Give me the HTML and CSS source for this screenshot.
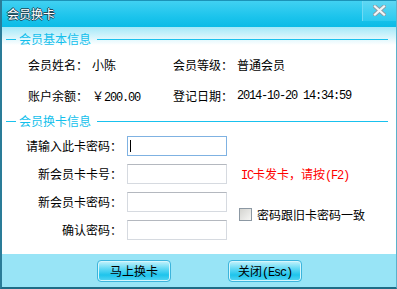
FILE: index.html
```html
<!DOCTYPE html>
<html lang="zh-CN">
<head>
    <meta charset="UTF-8">
    <title>会员换卡</title>
    <link rel="stylesheet" href="styles.css">
</head>
<body>
    <div class="window">
        <div class="titlebar">
            <span class="title">会员换卡</span>
            <div class="close">
                <svg width="13" height="11" viewBox="0 0 13 11">
                    <path d="M2 1.5 L11 9.5 M11 1.5 L2 9.5" stroke="#8a9ea8" stroke-width="4" stroke-linecap="square"/>
                    <path d="M2 1.5 L11 9.5 M11 1.5 L2 9.5" stroke="#f2f5f6" stroke-width="2.2" stroke-linecap="square"/>
                </svg>
            </div>
        </div>

        <div class="content">
            <div class="sec-head">
                <span class="line short"></span>
                <span class="sec-title">会员基本信息</span>
                <span class="line long"></span>
            </div>

            <div class="info">
                <span>会员姓名：</span>
                <span>小陈</span>
                <span>会员等级：</span>
                <span>普通会员</span>
                <span>账户余额：</span>
                <span>￥<span class="mono">200.00</span></span>
                <span>登记日期：</span>
                <span class="mono">2014-10-20 14:34:59</span>
            </div>

            <div class="sec-head second">
                <span class="line short"></span>
                <span class="sec-title">会员换卡信息</span>
                <span class="line long"></span>
            </div>

            <div class="form">
                <label class="lbl">请输入此卡密码：</label>
                <div class="field focus"><span class="caret"></span></div>

                <label class="lbl">新会员卡卡号：</label>
                <div class="field"></div>
                <div class="hint"><span class="mono">IC</span>卡发卡，请按<span class="mono">(F2)</span></div>

                <label class="lbl">新会员卡密码：</label>
                <div class="field"></div>
                <div class="check">
                    <span class="box"></span>
                    <span>密码跟旧卡密码一致</span>
                </div>

                <label class="lbl">确认密码：</label>
                <div class="field"></div>
            </div>
        </div>

        <div class="footer">
            <div class="btn">马上换卡</div>
            <div class="btn">关闭<span class="mono">(Esc)</span></div>
        </div>
    </div>
</body>
</html>
```

FILE: styles.css
```css
body {
    margin: 0;
    font-family: "Noto Sans CJK SC", "Noto Sans", sans-serif;
    font-size: 12px;
    color: #000;
}

.window {
    width: 397px;
    height: 289px;
    box-sizing: border-box;
    border-left: 2px solid #2a7c98;
    border-right: 1px solid #5ab2cc;
    border-bottom: 2px solid #1f6c86;
    display: flex;
    flex-direction: column;
    background-color: #fff;
}

.titlebar {
    height: 27px;
    box-sizing: border-box;
    border-top: 1px solid #1c93b8;
    background: linear-gradient(#41d1f2, #1cc4ec 60%, #0bbbe6);
    display: flex;
    align-items: center;
    justify-content: space-between;
}

.title {
    padding-left: 5px;
    margin-top: -1px;
    color: #fff;
    line-height: 14px;
    text-shadow: 1px 0 0 #234a58, -1px 0 0 #234a58, 0 1px 0 #234a58, 0 -1px 0 #234a58;
}

.close {
    align-self: flex-start;
    width: 34px;
    height: 20px;
    border-left: 1px solid #6fdaf4;
    background: linear-gradient(#5fd7f3, #2ccaef);
    display: flex;
    align-items: center;
    justify-content: center;
    padding-bottom: 2px;
    box-sizing: border-box;
}

.content {
    height: 227px;
    background: linear-gradient(#a3e8f8, #ffffff 18px);
    padding-top: 6px;
    box-sizing: border-box;
}

.sec-head {
    display: flex;
    align-items: center;
    height: 12px;
    line-height: 12px;
}

.sec-head.second {
    margin-top: 11px;
}

.line {
    height: 1px;
    background-color: #19c1ee;
}

.line.short {
    width: 10px;
    margin-left: 4px;
}

.line.long {
    flex: 1;
    margin-left: 6px;
    margin-right: 8px;
}

.sec-title {
    margin-left: 3px;
    color: #12bfec;
}

.info {
    display: grid;
    grid-template-columns: 64px 81px 64px 1fr;
    grid-auto-rows: 16px;
    row-gap: 15px;
    line-height: 16px;
    margin-top: 12px;
    padding-left: 26px;
}

.mono {
    font-family: "Liberation Mono", monospace;
    letter-spacing: -1.2px;
}

.form {
    display: grid;
    grid-template-columns: 96px 100px 1fr;
    grid-auto-rows: 20px;
    column-gap: 5px;
    row-gap: 8px;
    margin-top: 9px;
    padding-left: 24px;
}

.lbl {
    grid-column: 1;
    text-align: right;
    line-height: 20px;
}

.field {
    grid-column: 2;
    box-sizing: border-box;
    border: 1px solid #d6dae0;
    border-top-color: #b4b8bf;
    background-color: #fff;
    position: relative;
}

.field.focus {
    border-color: #7fb2e2;
}

.caret {
    position: absolute;
    left: 2px;
    top: 3px;
    width: 1px;
    height: 12px;
    background-color: #000;
}

.hint {
    grid-column: 3;
    grid-row: 2;
    padding-left: 9px;
    color: #f00;
    line-height: 20px;
}

.check {
    grid-column: 3;
    grid-row: 3 / span 2;
    align-self: center;
    margin-bottom: 4px;
    padding-left: 7px;
    display: flex;
    align-items: center;
    gap: 5px;
}

.box {
    width: 13px;
    height: 13px;
    box-sizing: border-box;
    border: 1px solid #8c98a3;
    background: linear-gradient(135deg, #d4d4d0, #f6f6f4);
}

.footer {
    flex: 1;
    background-color: #98e4f6;
    display: flex;
    align-items: flex-start;
    gap: 57px;
    padding: 6px 0 0 95px;
}

.btn {
    width: 74px;
    height: 22px;
    box-sizing: border-box;
    border: 1px solid #3cb4dc;
    border-radius: 4px;
    box-shadow: inset 0 0 0 1px #d4f6fd;
    background: linear-gradient(#c6f3fc, #5fd8f4 40%, #1ec4ec 70%, #55d5f3);
    text-align: center;
    line-height: 20px;
}
```
